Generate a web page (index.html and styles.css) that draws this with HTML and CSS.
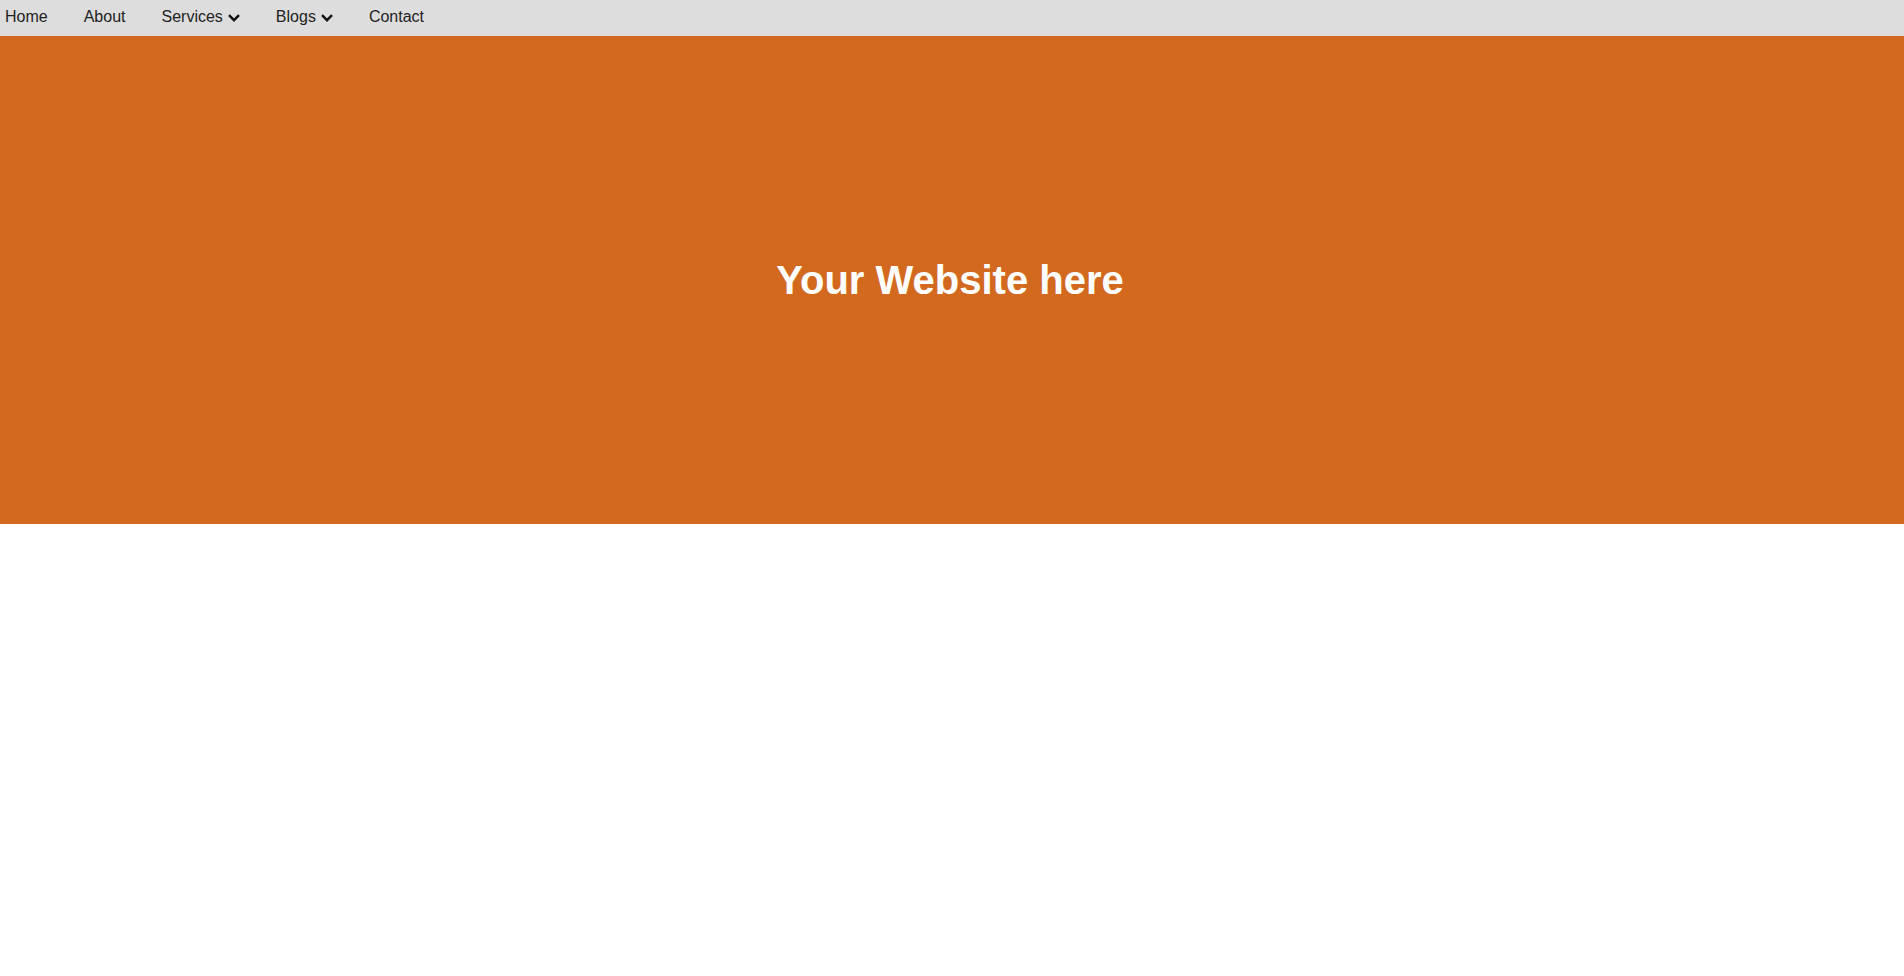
FILE: index.html
```html
<!DOCTYPE html>
<html>
<head>
<meta charset="utf-8">
<link rel="stylesheet" href="styles.css">
</head>
<body>
<nav class="nav">
  <a class="nav-link" href="#">Home</a>
  <a class="nav-link" href="#">About</a>
  <a class="nav-link" href="#">Services <svg class="chev" viewBox="0 0 12 8" width="12" height="8"><path d="M1 1.2 L6 6.2 L11 1.2" fill="none" stroke="#111" stroke-width="2.4"/></svg></a>
  <a class="nav-link" href="#">Blogs <svg class="chev" viewBox="0 0 12 8" width="12" height="8"><path d="M1 1.2 L6 6.2 L11 1.2" fill="none" stroke="#111" stroke-width="2.4"/></svg></a>
  <a class="nav-link" href="#">Contact</a>
</nav>
<header class="hero">
  <h1 class="hero-title">Your Website here</h1>
</header>
</body>
</html>
```
FILE: styles.css
```css
html, body {
  margin: 0;
  padding: 0;
  background: #fff;
  font-family: "Liberation Sans", Arial, sans-serif;
}
.nav {
  display: flex;
  align-items: center;
  height: 36px;
  background: #dddddd;
  padding: 0 0 0 5px;
  box-sizing: border-box;
  gap: 36px;
}
.nav-link {
  display: flex;
  align-items: center;
  gap: 5px;
  color: #222;
  text-decoration: none;
  font-size: 16px;
  line-height: 20px;
  padding-bottom: 2px;
}
.chev {
  display: block;
  margin-top: 1px;
}
.hero {
  height: 488px;
  background: #d2691e;
  display: flex;
  align-items: center;
  justify-content: center;
}
.hero-title {
  margin: 0 4px 0 0;
  color: #fff;
  font-size: 40px;
  font-weight: bold;
}
```
